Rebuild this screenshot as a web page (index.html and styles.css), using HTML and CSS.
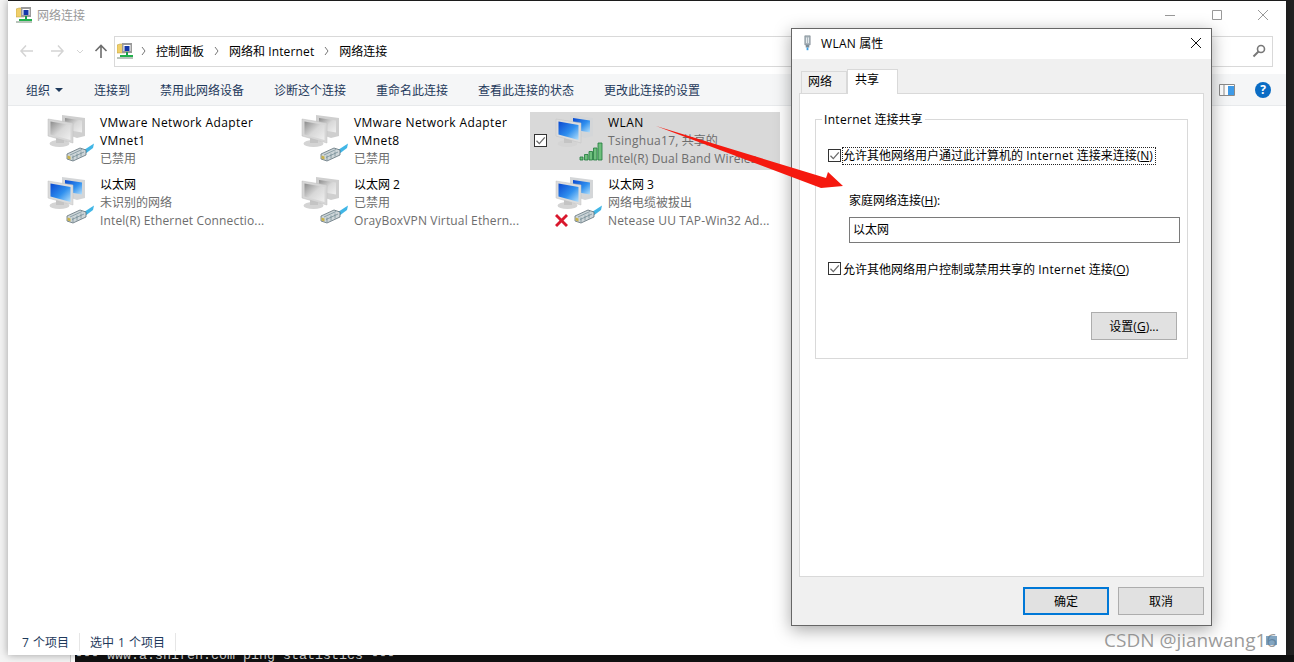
FILE: index.html
```html
<!DOCTYPE html>
<html lang="zh-CN">
<head>
    <meta charset="UTF-8">
    <title>网络连接</title>
    <link rel="stylesheet" href="styles.css">
</head>
<body>
    <svg class="defs" width="0" height="0">
        <defs>
            <linearGradient id="gScreen" x1="0" y1="0" x2="1" y2="1">
                <stop offset="0" stop-color="#8c8c8c"/>
                <stop offset="0.5" stop-color="#d8d8d8"/>
                <stop offset="1" stop-color="#efefef"/>
            </linearGradient>
            <linearGradient id="bScreen" x1="0" y1="0" x2="1" y2="1">
                <stop offset="0" stop-color="#0a48d0"/>
                <stop offset="0.55" stop-color="#2f8fee"/>
                <stop offset="1" stop-color="#b5e0fb"/>
            </linearGradient>
            <symbol id="stand" viewBox="0 2 60 58">
                <ellipse cx="19.500" cy="35.500" rx="10" ry="3.600" fill="#d4d4d4"/>
                <path d="M16 27h8v8h-8z" fill="#c4c4c4"/>
            </symbol>
            <symbol id="pcGray" viewBox="0 2 60 58">
                <path d="M22 5l23 3v18l-8 2-15-5z" fill="#cfcfcf"/>
                <path d="M25 8l17 2.500v12l-17-3z" fill="url(#gScreen)"/>
                <use href="#stand"/>
                <path d="M8 9l25 4v20l-25-7z" fill="#d6d6d6" stroke="#bdbdbd" stroke-width=".5"/>
                <path d="M10.500 11.500l20 3.500v15l-20-5.500z" fill="url(#gScreen)"/>
            </symbol>
            <symbol id="pcBlue" viewBox="0 2 60 58">
                <path d="M22 5l23 3v18l-8 2-15-5z" fill="#d4d6d8"/>
                <path d="M25 8l17 2.500v12l-17-3z" fill="url(#bScreen)"/>
                <use href="#stand"/>
                <path d="M8 9l25 4v20l-25-7z" fill="#dcdcdc" stroke="#c0c0c0" stroke-width=".5"/>
                <path d="M10.500 11.500l20 3.500v15l-20-5.500z" fill="url(#bScreen)"/>
            </symbol>
            <symbol id="plug" viewBox="0 2 60 58">
                <path d="M44 40l10-6.500-1 4.500-8 6z" fill="#41b6e6"/>
                <path d="M27 44l13-6 6 2v5l-13 6-6-2z" fill="#cdd5d8" stroke="#5f7078" stroke-width=".8"/>
                <path d="M30 45l12-5.500M32 47.500l12-5.500M33 45.500v5M37 43.500v5M41 41.500v5" stroke="#6d8690" stroke-width=".7" fill="none"/>
                <path d="M27.500 45.500l3 1v3l-3-1z" fill="#c9b24a"/>
            </symbol>
            <symbol id="bars" viewBox="0 2 60 58">
                <path d="M32 47h3v3h-3zM36.500 44.500h3.500v5.500h-3.500zM41 41.500h3.500v8.500h-3.500zM45.500 38h3.500v12h-3.500zM50 33h4v17h-4z" fill="#6fbf7d" stroke="#1f7a3a" stroke-width=".8"/>
            </symbol>
            <symbol id="redX" viewBox="0 2 60 58">
                <path d="M9 42l4.500 4.500 4.500-4.500 2 2-4.500 4.500 4.500 4.500-2 2-4.500-4.500-4.500 4.500-2-2 4.500-4.500-4.500-4.500z" fill="#d9182d"/>
            </symbol>
            <symbol id="netIcon" viewBox="0 0 16 16">
                <path d="M0 2l3-1h5v9H0z" fill="#f0cf6a" stroke="#b89a3c" stroke-width=".5"/>
                <path d="M5 0h10v10H5z" fill="#9a9a9a"/>
                <path d="M6.500 2h7v6h-7z" fill="#fff"/>
                <path d="M7.500 3h5v5h-5z" fill="#1537a8"/>
                <path d="M9 9h2v3H9z" fill="#1a9c4a"/>
                <path d="M3 12h13v2H3z" fill="#22b14c"/>
                <path d="M0 14h16v2H0z" fill="#b9c4bb"/>
            </symbol>
            <symbol id="tick" viewBox="0 0 11 11">
                <path d="M1.500 5.800l2.800 2.800 5.500-6.200" fill="none" stroke="#6a6a6a" stroke-width="1.300"/>
            </symbol>
        </defs>
    </svg>

    <div class="terminal"><span>--- www.a.shifen.com ping statistics ---</span></div>

    <div class="window">
        <div class="titlebar">
            <svg class="app-icon"><use href="#netIcon"/></svg>
            <span class="title-text">网络连接</span>
            <div class="caption">
                <svg width="46" height="30" viewBox="0 0 46 30"><path d="M17 15.500h10" stroke="#999" fill="none"/></svg>
                <svg width="46" height="30" viewBox="0 0 46 30"><path d="M18.500 10.500h9v9h-9z" stroke="#999" fill="none"/></svg>
                <svg width="46" height="30" viewBox="0 0 46 30"><path d="M18 10l10 10M28 10L18 20" stroke="#999" fill="none"/></svg>
            </div>
        </div>

        <div class="navbar">
            <svg class="nav-icons" width="98" height="20" viewBox="0 0 98 20">
                <path d="M5 10H17M10 4.500L5 10l5 5.500" stroke="#d4d4d4" stroke-width="1.500" fill="none"/>
                <path d="M35 10H47M42 4.500L47 10l-5 5.500" stroke="#d4d4d4" stroke-width="1.500" fill="none"/>
                <path d="M61 9l3 3 3-3" stroke="#d4d4d4" fill="none"/>
                <path d="M85 17V5M79.500 10L85 4.500l5.500 5.500" stroke="#6d6d6d" stroke-width="1.600" fill="none"/>
            </svg>
            <div class="address">
                <svg class="app-icon addr-icon"><use href="#netIcon"/></svg>
                <svg class="chev" width="5" height="8" viewBox="0 0 5 8"><path d="M1 0l3 4-3 4" stroke="#777" fill="none"/></svg>
                <span class="crumb">控制面板</span>
                <svg class="chev" width="5" height="8" viewBox="0 0 5 8"><path d="M1 0l3 4-3 4" stroke="#777" fill="none"/></svg>
                <span class="crumb">网络和 <span class="lat">Internet</span></span>
                <svg class="chev" width="5" height="8" viewBox="0 0 5 8"><path d="M1 0l3 4-3 4" stroke="#777" fill="none"/></svg>
                <span class="crumb">网络连接</span>
                <svg class="search" width="14" height="14" viewBox="0 0 14 14">
                    <circle cx="9" cy="5" r="3.500" stroke="#777" stroke-width="1.600" fill="none"/>
                    <path d="M6.500 7.500L1.500 12.500" stroke="#777" stroke-width="2" fill="none"/>
                </svg>
            </div>
        </div>

        <div class="toolbar">
            <span class="tool tool-menu">组织<i class="caret"></i></span>
            <span class="tool">连接到</span>
            <span class="tool">禁用此网络设备</span>
            <span class="tool">诊断这个连接</span>
            <span class="tool">重命名此连接</span>
            <span class="tool">查看此连接的状态</span>
            <span class="tool">更改此连接的设置</span>
            <div class="tool-right">
                <svg width="16" height="12" viewBox="0 0 16 12">
                    <path d="M.5.500h15v11H.5z" fill="#fff" stroke="#8a8a8a"/>
                    <path d="M5 1v10" stroke="#8a8a8a"/>
                    <path d="M9 2h6v9H9z" fill="#3f9be8"/>
                </svg>
                <span class="help">?</span>
            </div>
        </div>

        <div class="items">
            <div class="item">
                <svg class="item-icon"><use href="#pcGray"/><use href="#plug"/></svg>
                <div class="item-text">
                    <div class="name lat">VMware Network Adapter VMnet1</div>
                    <div class="sub">已禁用</div>
                </div>
            </div>
            <div class="item">
                <svg class="item-icon"><use href="#pcGray"/><use href="#plug"/></svg>
                <div class="item-text">
                    <div class="name lat">VMware Network Adapter VMnet8</div>
                    <div class="sub">已禁用</div>
                </div>
            </div>
            <div class="item selected">
                <span class="check item-check"><svg width="11" height="11"><use href="#tick"/></svg></span>
                <svg class="item-icon"><use href="#pcBlue"/><use href="#bars"/></svg>
                <div class="item-text">
                    <div class="name lat">WLAN</div>
                    <div class="sub"><span class="lat">Tsinghua17,</span> 共享的</div>
                    <div class="sub lat">Intel(R) Dual Band Wireles...</div>
                </div>
            </div>
            <div class="item">
                <svg class="item-icon"><use href="#pcBlue"/><use href="#plug"/></svg>
                <div class="item-text">
                    <div class="name">以太网</div>
                    <div class="sub">未识别的网络</div>
                    <div class="sub lat">Intel(R) Ethernet Connectio...</div>
                </div>
            </div>
            <div class="item">
                <svg class="item-icon"><use href="#pcGray"/><use href="#plug"/></svg>
                <div class="item-text">
                    <div class="name">以太网 2</div>
                    <div class="sub">已禁用</div>
                    <div class="sub lat">OrayBoxVPN Virtual Ethern...</div>
                </div>
            </div>
            <div class="item">
                <svg class="item-icon"><use href="#pcBlue"/><use href="#plug"/><use href="#redX"/></svg>
                <div class="item-text">
                    <div class="name">以太网 3</div>
                    <div class="sub">网络电缆被拔出</div>
                    <div class="sub lat">Netease UU TAP-Win32 Ad...</div>
                </div>
            </div>
        </div>

        <div class="statusbar">
            <span class="status-cell">7 个项目</span>
            <span class="status-cell">选中 1 个项目</span>
        </div>
    </div>

    <div class="dialog">
        <div class="dialog-title">
            <svg width="9" height="16" viewBox="0 0 10 16">
                <path d="M2 0h6v10H2z" fill="#a9b4bc" stroke="#6c7780" stroke-width=".6"/>
                <path d="M3.500 2h1v6h-1zM5.500 2h1v6h-1z" fill="#eef2f4"/>
                <path d="M3 10h4v3H3z" fill="#7d8c96"/>
                <path d="M4 13h2v3H4z" fill="#3aa0e6"/>
            </svg>
            <span><span class="lat">WLAN</span> 属性</span>
            <svg class="dialog-close" width="10" height="10" viewBox="0 0 10 10"><path d="M0 0l10 10M10 0L0 10" stroke="#111" fill="none"/></svg>
        </div>
        <div class="dialog-body">
            <div class="tabs">
                <span class="tab">网络</span>
                <span class="tab active">共享</span>
            </div>
            <div class="panel">
                <fieldset class="group">
                    <legend><span class="lat">Internet</span> 连接共享</legend>
                    <div class="check-row">
                        <span class="check"><svg width="11" height="11"><use href="#tick"/></svg></span>
                        <span class="focused">允许其他网络用户通过此计算机的 <span class="lat">Internet</span> 连接来连接(<u>N</u>)</span>
                    </div>
                    <div class="field-label">家庭网络连接(<u>H</u>):</div>
                    <div class="select">以太网</div>
                    <div class="check-row second">
                        <span class="check"><svg width="11" height="11"><use href="#tick"/></svg></span>
                        <span>允许其他网络用户控制或禁用共享的 <span class="lat">Internet</span> 连接(<u>O</u>)</span>
                    </div>
                    <div class="group-foot">
                        <button class="btn">设置(<u>G</u>)...</button>
                    </div>
                </fieldset>
            </div>
            <div class="dialog-foot">
                <button class="btn primary">确定</button>
                <button class="btn">取消</button>
            </div>
        </div>
    </div>

    <svg class="arrow" width="1294" height="662" viewBox="0 0 1294 662">
        <path d="M656 126L826 178 828 172 843 186 821 188z" fill="#f5190f"/>
    </svg>

    <div class="watermark">CSDN @jianwang16<i class="thumb"></i></div>
</body>
</html>
```

FILE: styles.css
```css
* {
    box-sizing: border-box;
}

body {
    margin: 0;
    height: 662px;
    overflow: hidden;
    position: relative;
    background: linear-gradient(90deg, #f3f3f3 8px, #222 8px);
    font-family: "Open Sans", "Noto Sans CJK SC", sans-serif;
    font-size: 12px;
    color: #000;
}

u {
    text-underline-offset: 1px;
}

/* latin text runs a bit wider in the original */
.lat {
    letter-spacing: 0.3px;
}

.defs {
    position: absolute;
}

/* stuff behind the window */
.terminal {
    position: absolute;
    left: 0;
    top: 655px;
    width: 1294px;
    height: 7px;
    overflow: hidden;
    padding-left: 75px;
    background: linear-gradient(90deg, #f4f4f4 70px, #999 70px, #fff 71px, #fff 75px, #111 75px);
    font-family: "Liberation Mono", monospace;
    font-size: 13.33px;
    line-height: 16px;
    color: #ddd;
    white-space: pre;
}

.terminal span {
    display: block;
    margin-top: -7px;
}

.window {
    position: absolute;
    left: 8px;
    top: 1px;
    width: 1278px;
    height: 654px;
    display: flex;
    flex-direction: column;
    background: #fff;
    box-shadow: 0 0 8px rgba(0, 0, 0, 0.35);
}

.titlebar {
    height: 28px;
    display: flex;
    align-items: center;
    padding-left: 8px;
}

.app-icon {
    width: 16px;
    height: 16px;
    flex: none;
}

.title-text {
    margin-left: 5px;
    color: #999;
}

.caption {
    margin-left: auto;
    display: flex;
    align-items: center;
    height: 28px;
}

.navbar {
    height: 45px;
    display: flex;
    align-items: flex-start;
    padding: 7px 13px 0 8px;
}

.nav-icons {
    margin-top: 5px;
    flex: none;
}

.address {
    flex: 1;
    height: 31px;
    display: flex;
    align-items: center;
    border: 1px solid #d9d9d9;
    padding: 0 0 2px 2px;
}

.addr-icon {
    margin-right: -2px;
}

.chev {
    margin-left: 10px;
    flex: none;
}

.crumb {
    margin-left: 10px;
}

.crumb .lat {
    letter-spacing: 0.15px;
}

.search {
    margin-left: auto;
    margin-right: 6px;
}

.toolbar {
    height: 32px;
    display: flex;
    align-items: center;
    gap: 30px;
    padding-left: 18px;
    background: #f5f6f7;
    color: #1e395b;
    border-bottom: 1px solid #e8eaec;
}

.tool-menu {
    display: flex;
    align-items: center;
    padding-right: 1px;
}

.caret {
    margin-left: 5px;
    border-left: 4px solid transparent;
    border-right: 4px solid transparent;
    border-top: 4px solid #1e395b;
}

.tool-right {
    margin-left: auto;
    display: flex;
    align-items: center;
    gap: 20px;
    padding-right: 15px;
}

.help {
    width: 16px;
    height: 16px;
    border-radius: 50%;
    background: #0a6cc4;
    color: #fff;
    font-weight: 700;
    line-height: 16px;
    text-align: center;
}

.items {
    flex: 1;
    display: grid;
    grid-template-columns: repeat(3, 250px);
    grid-auto-rows: 58px;
    gap: 4px;
    align-content: start;
    padding: 6px 0 0 14px;
}

.item {
    position: relative;
    display: flex;
    color: #6d6d6d;
}

.item.selected {
    background: #d9d9d9;
}

.item-icon {
    width: 78px;
    height: 58px;
    padding-left: 18px;
    flex: none;
}

.item-text {
    width: 172px;
    padding-top: 2px;
    line-height: 18px;
}

.name {
    color: #000;
}

.name.lat {
    letter-spacing: 0.4px;
}

.sub {
    white-space: nowrap;
}

.sub.lat {
    letter-spacing: 0.15px;
}

.check {
    width: 13px;
    height: 13px;
    flex: none;
    display: flex;
    align-items: center;
    justify-content: center;
    border: 1px solid #333;
    background: #fff;
}

.item-check {
    position: absolute;
    left: 4px;
    top: 22px;
}

.statusbar {
    height: 26px;
    display: flex;
    align-items: center;
    padding-left: 14px;
    color: #1e395b;
    word-spacing: 1px;
}

.status-cell {
    padding-right: 10px;
    margin-right: 10px;
    border-right: 1px solid #e6e6e6;
}

/* properties dialog, sits over the explorer window */
.dialog {
    position: absolute;
    left: 791px;
    top: 28px;
    width: 421px;
    height: 598px;
    display: flex;
    flex-direction: column;
    border: 1px solid #666;
    background: #f0f0f0;
    box-shadow: 0 4px 16px rgba(0, 0, 0, 0.35);
}

.dialog-title {
    height: 30px;
    flex: none;
    display: flex;
    align-items: center;
    gap: 9px;
    padding: 0 10px 2px 11px;
    background: #fff;
}

.dialog-close {
    margin-left: auto;
}

.dialog-body {
    flex: 1;
    display: flex;
    flex-direction: column;
    padding: 9px 7px 10px;
}

.tabs {
    height: 25px;
    flex: none;
    display: flex;
    align-items: flex-end;
    padding-left: 2px;
}

.tab {
    width: 46px;
    height: 22px;
    line-height: 20px;
    padding-left: 6px;
    border: 1px solid #d9d9d9;
    border-bottom: 0;
    background: #f0f0f0;
}

.tab.active {
    width: 51px;
    height: 25px;
    margin-bottom: -1px;
    padding-left: 7px;
    background: #fff;
    position: relative;
    border-right-color: #d9d9d9;
}

.panel {
    height: 484px;
    flex: none;
    padding: 17px 15px 0;
    border: 1px solid #d9d9d9;
    background: #fff;
}

.group {
    margin: 0;
    height: 248px;
    min-width: 0;
    padding: 0 7px 0 12px;
    border: 1px solid #d9d9d9;
}

.group legend {
    padding: 0 2px;
    margin-left: -6px;
    line-height: 17px;
}

.check-row {
    display: flex;
    align-items: center;
    height: 17px;
    margin-top: 19px;
    gap: 2px;
}

.check-row.second {
    margin-top: 17px;
}

.focused {
    outline: 1px dotted #222;
    line-height: 16px;
    padding-right: 2px;
}

.field-label {
    margin: 28px 0 0 21px;
    line-height: 17px;
}

.select {
    height: 26px;
    margin: 8px 0 0 21px;
    padding-left: 3px;
    line-height: 23px;
    border: 1px solid #7a7a7a;
}

.group-foot {
    display: flex;
    justify-content: flex-end;
    margin-top: 35px;
    padding-right: 3px;
}

.btn {
    width: 86px;
    height: 28px;
    padding: 0;
    border: 1px solid #adadad;
    background: #e1e1e1;
    color: #000;
    font: inherit;
}

.btn.primary {
    border: 2px solid #0078d7;
}

.dialog-foot {
    margin-top: auto;
    display: flex;
    justify-content: flex-end;
    gap: 9px;
}

/* red annotation arrow and watermark, drawn on top of the screenshot */
.arrow {
    position: absolute;
    left: 0;
    top: 0;
    pointer-events: none;
}

.watermark {
    position: absolute;
    left: 1104px;
    top: 627px;
    font-family: "Open Sans", sans-serif;
    font-size: 19px;
    line-height: 26px;
    color: rgba(110, 110, 110, 0.7);
    white-space: nowrap;
}

.thumb {
    position: absolute;
    right: 0;
    top: 9px;
    width: 11px;
    height: 9px;
    background: #4d7fa6;
    opacity: 0.7;
}
```
